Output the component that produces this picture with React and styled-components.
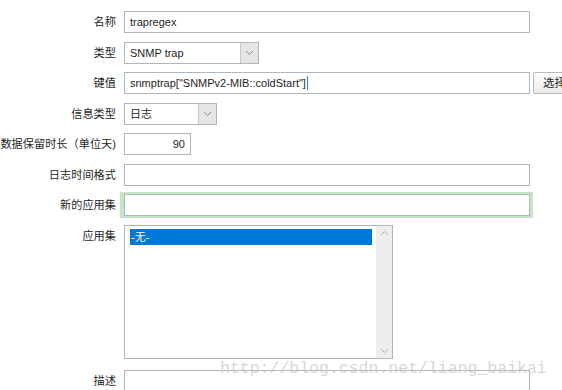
import React from "react";
import styled, { createGlobalStyle } from "styled-components";

const Global = createGlobalStyle`
  html, body { margin: 0; padding: 0; background: #fff; }
  body {
    font-family: "Liberation Sans", "Noto Sans CJK SC", sans-serif;
    font-size: 11px;
    color: #1f1f1f;
    overflow: hidden;
  }
`;

const Page = styled.div`
  position: relative;
  width: 562px;
  height: 390px;
  overflow: hidden;
`;

const Form = styled.div`
  display: grid;
  grid-template-columns: 116px 1fr;
  column-gap: 8px;
  row-gap: 8.5px;
  padding-top: 11px;
`;

const Label = styled.div`
  display: flex;
  justify-content: flex-end;
  white-space: nowrap;
  line-height: 22px;
  height: 22px;
  font-size: 11.2px;
  margin-top: ${(p) => p.$top || 0}px;
`;

const Field = styled.div`
  display: flex;
  align-items: flex-start;
  gap: 3px;
  margin-top: ${(p) => p.$top || 0}px;
`;

const Input = styled.div`
  box-sizing: border-box;
  width: ${(p) => p.$w || 406}px;
  height: 22px;
  border: 1px solid #abb8c1;
  background: #fff;
  padding: 0 ${(p) => (p.$right ? 5 : 5)}px;
  line-height: 20px;
  display: flex;
  align-items: center;
  justify-content: ${(p) => (p.$right ? "flex-end" : "flex-start")};
  white-space: nowrap;
  box-shadow: ${(p) =>
    p.$focus
      ? "0 0 0 2px #c6e4c6, -2px 0 0 2px #c6e4c6, 1px 0 0 2px #c6e4c6"
      : "none"};
`;

const Caret = styled.span`
  display: inline-block;
  width: 1px;
  height: 14px;
  background: #2a7de1;
  margin-left: 1px;
`;

const Select = styled.div`
  box-sizing: border-box;
  width: ${(p) => p.$w}px;
  height: 22px;
  border: 1px solid #abb8c1;
  display: flex;
  background: #fff;
`;

const SelectText = styled.div`
  flex: 1;
  padding-left: 5px;
  line-height: 20px;
`;

const SelectBtn = styled.div`
  width: 17px;
  height: 20px;
  background: #e6e6e6;
  border-left: 1px solid #c8c8c8;
  display: flex;
  align-items: center;
  justify-content: center;
`;

const Button = styled.div`
  box-sizing: border-box;
  height: 22px;
  padding: 0 9px;
  border: 1px solid #b8b8b8;
  border-radius: 2px;
  background: linear-gradient(#fdfdfd, #ececec);
  line-height: 20px;
  font-size: 11.5px;
  white-space: nowrap;
`;

const ListBox = styled.div`
  box-sizing: border-box;
  width: 269px;
  height: 134px;
  border: 1px solid #abb8c1;
  display: flex;
  background: #fff;
`;

const ListItems = styled.div`
  flex: 1;
  padding: 3px 4px 0 5px;
`;

const Option = styled.div`
  height: 16px;
  line-height: 16px;
  background: ${(p) => (p.$selected ? "#0078d7" : "transparent")};
  color: ${(p) => (p.$selected ? "#fff" : "inherit")};
  padding-left: 1px;
`;

const Scrollbar = styled.div`
  width: 16px;
  background: #eeeeee;
  display: flex;
  flex-direction: column;
  justify-content: space-between;
  align-items: center;
  padding: 4px 0;
`;

const TextArea = styled.div`
  box-sizing: border-box;
  width: 406px;
  height: 60px;
  border: 1px solid #abb8c1;
  background: #fff;
`;

const Watermark = styled.div`
  position: absolute;
  left: 220px;
  top: 359px;
  font-family: "Liberation Mono", "DejaVu Sans Mono", monospace;
  font-size: 16.5px;
  color: rgba(200, 200, 200, 0.75);
  white-space: nowrap;
  pointer-events: none;
`;

const Chevron = ({ up, color = "#8a8a8a" }) => (
  <svg width="9" height="6" viewBox="0 0 9 6">
    <path
      d={up ? "M1 5 L4.5 1.5 L8 5" : "M1 1 L4.5 4.5 L8 1"}
      fill="none"
      stroke={color}
      strokeWidth="1"
    />
  </svg>
);

export default function App() {
  return (
    <Page>
      <Global />
      <Form>
        <Label>名称</Label>
        <Field>
          <Input>trapregex</Input>
        </Field>

        <Label>类型</Label>
        <Field>
          <Select $w={135}>
            <SelectText>SNMP trap</SelectText>
            <SelectBtn>
              <Chevron />
            </SelectBtn>
          </Select>
        </Field>

        <Label>键值</Label>
        <Field>
          <Input>
            snmptrap["SNMPv2-MIB::coldStart"]
            <Caret />
          </Input>
          <Button>选择</Button>
        </Field>

        <Label>信息类型</Label>
        <Field>
          <Select $w={93}>
            <SelectText>日志</SelectText>
            <SelectBtn>
              <Chevron />
            </SelectBtn>
          </Select>
        </Field>

        <Label>历史数据保留时长（单位天)</Label>
        <Field>
          <Input $w={67} $right>
            90
          </Input>
        </Field>

        <Label>日志时间格式</Label>
        <Field>
          <Input />
        </Field>

        <Label>新的应用集</Label>
        <Field>
          <Input $focus />
        </Field>

        <Label>应用集</Label>
        <Field>
          <ListBox>
            <ListItems>
              <Option $selected>-无-</Option>
            </ListItems>
            <Scrollbar>
              <Chevron up color="#b5b5b5" />
              <Chevron color="#b5b5b5" />
            </Scrollbar>
          </ListBox>
        </Field>

        <Label $top={2.5}>描述</Label>
        <Field $top={2.5}>
          <TextArea />
        </Field>
      </Form>
      <Watermark>http://blog.csdn.net/liang_baikai</Watermark>
    </Page>
  );
}
